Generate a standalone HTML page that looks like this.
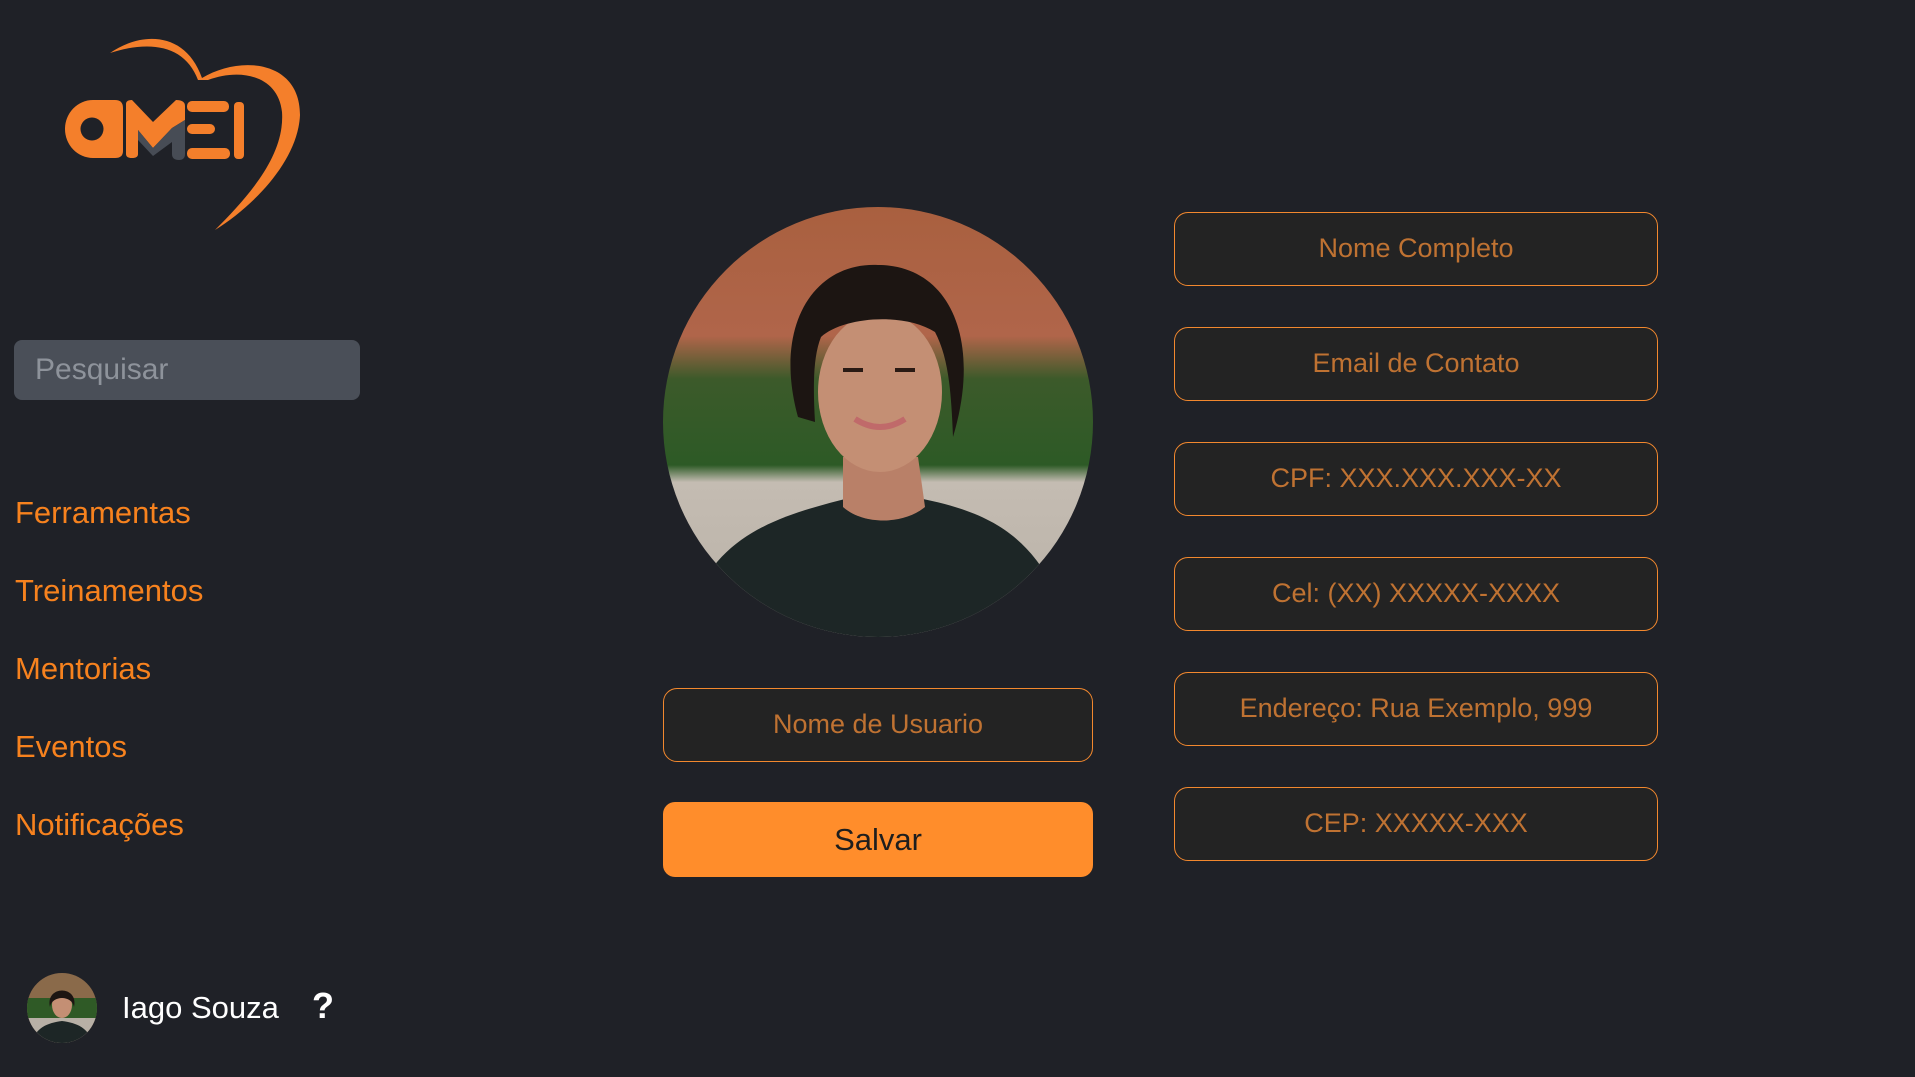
<!DOCTYPE html>
<html><head><meta charset="utf-8"><style>
*{margin:0;padding:0;box-sizing:border-box}
body{width:1915px;height:1077px;background:#1f2127;font-family:"Liberation Sans",Roboto,sans-serif;position:relative;overflow:hidden}
.abs{position:absolute}
.search{left:14px;top:340px;width:346px;height:60px;background:#4a4f58;border-radius:8px;color:#8e939b;font-size:30px;line-height:60px;padding-left:21px}
.nav{left:15px;color:#f7821e;font-size:31px;line-height:36px}
.field{width:484px;height:74px;background:#232323;border:1.5px solid #f2882e;border-radius:14px;color:#bf7232;font-size:27px;text-align:center;line-height:71px}
.btn{left:663px;top:802px;width:430px;height:75px;background:#ff8d2b;border-radius:12px;color:#1e1e1e;font-size:31px;text-align:center;line-height:75px}
</style></head><body>
<svg class="abs" style="left:0;top:0" width="320" height="240" viewBox="0 0 320 240">
<path d="M110,53 C140,32 185,30 202,78 C240,55 300,60 300,115 C298,160 255,205 215,230 C250,195 285,155 282,112 C278,75 240,68 208,80 L198,80 C185,45 150,40 110,53Z" fill="#f47f2b"/>
<path d="M93,100 L115,100 Q123,100 123,108 L123,151 Q123,158 115,158 L93,158 A28,29 0 0 1 93,100Z" fill="#f47f2b"/>
<circle cx="92" cy="129" r="11.5" fill="#1f2127"/>
<path d="M126,104 Q126,100 132,100 L153,122 L176,100 Q185,100 185,106 L185,120 L172,128 L153,148 L138,130 L138,154 Q138,158 132,158 Q126,158 126,154Z" fill="#f47f2b"/>
<path d="M138,130 L153,148 L172,128 L185,120 L185,154 Q185,160 179,160 Q172,160 172,154 L172,142 L153,156 L138,140Z" fill="#474c55"/>
<rect x="187" y="101" width="42" height="11" rx="5" fill="#f47f2b"/>
<rect x="187" y="124" width="28" height="10" rx="5" fill="#f47f2b"/>
<rect x="187" y="148" width="43" height="11" rx="5" fill="#f47f2b"/>
<rect x="234" y="102" width="10" height="57" rx="4" fill="#f47f2b"/>
</svg>
<div class="abs search">Pesquisar</div>
<div class="abs nav" style="top:495px">Ferramentas</div>
<div class="abs nav" style="top:573px">Treinamentos</div>
<div class="abs nav" style="top:651px">Mentorias</div>
<div class="abs nav" style="top:729px">Eventos</div>
<div class="abs nav" style="top:807px">Notificações</div>

<svg class="abs" style="left:663px;top:207px" width="430" height="430" viewBox="0 0 430 430">
<defs><clipPath id="c"><circle cx="215" cy="215" r="215"/></clipPath>
<linearGradient id="bg" x1="0" y1="0" x2="0" y2="1"><stop offset="0" stop-color="#a9603f"/><stop offset="0.3" stop-color="#b0654a"/><stop offset="0.4" stop-color="#3c5a2a"/><stop offset="0.6" stop-color="#2d5a26"/><stop offset="0.64" stop-color="#c4bcb2"/><stop offset="1" stop-color="#b8b0a6"/></linearGradient></defs>
<g clip-path="url(#c)">
<rect width="430" height="430" fill="url(#bg)"/>
<path d="M20,430 C40,330 110,310 190,290 L250,290 C330,305 380,330 410,430Z" fill="#1d2626"/>
<path d="M180,250 L255,250 L262,300 C240,318 200,318 180,300Z" fill="#b98068"/>
<ellipse cx="217" cy="185" rx="62" ry="80" fill="#c48f74"/>
<path d="M135,210 C110,120 150,55 215,58 C285,58 320,130 290,230 C288,180 285,150 272,125 C240,105 180,110 158,130 C150,150 150,180 152,215Z" fill="#1c1512"/>
<path d="M192,212 Q217,228 242,212" stroke="#c06a6a" stroke-width="6" fill="none"/>
<path d="M180,163 h20 M232,163 h20" stroke="#2a1a14" stroke-width="4"/>
</g></svg>

<div class="abs field" style="left:663px;top:688px;width:430px">Nome de Usuario</div>
<div class="abs btn">Salvar</div>

<div class="abs field" style="left:1174px;top:212px">Nome Completo</div>
<div class="abs field" style="left:1174px;top:327px">Email de Contato</div>
<div class="abs field" style="left:1174px;top:442px">CPF: XXX.XXX.XXX-XX</div>
<div class="abs field" style="left:1174px;top:557px">Cel: (XX) XXXXX-XXXX</div>
<div class="abs field" style="left:1174px;top:672px">Endereço: Rua Exemplo, 999</div>
<div class="abs field" style="left:1174px;top:787px">CEP: XXXXX-XXX</div>

<svg class="abs" style="left:27px;top:973px" width="70" height="70" viewBox="0 0 70 70">
<defs><clipPath id="d"><circle cx="35" cy="35" r="35"/></clipPath></defs>
<g clip-path="url(#d)"><rect width="70" height="70" fill="#8a6a4a"/><rect y="25" width="70" height="20" fill="#2f5a26"/><rect y="45" width="70" height="25" fill="#b8b0a6"/>
<path d="M5,70 C8,55 20,50 35,48 C50,50 62,55 65,70Z" fill="#1d2626"/>
<ellipse cx="35" cy="32" rx="10" ry="13" fill="#c48f74"/><path d="M23,34 C18,12 52,12 47,34 C45,22 25,22 23,34Z" fill="#1c1512"/></g></svg>
<div class="abs" style="left:122px;top:990px;color:#fff;font-size:31px;line-height:36px">Iago Souza</div>
<div class="abs" style="left:312px;top:986px;color:#fff;font-size:36px;font-weight:bold;line-height:40px">?</div>
</body></html>
